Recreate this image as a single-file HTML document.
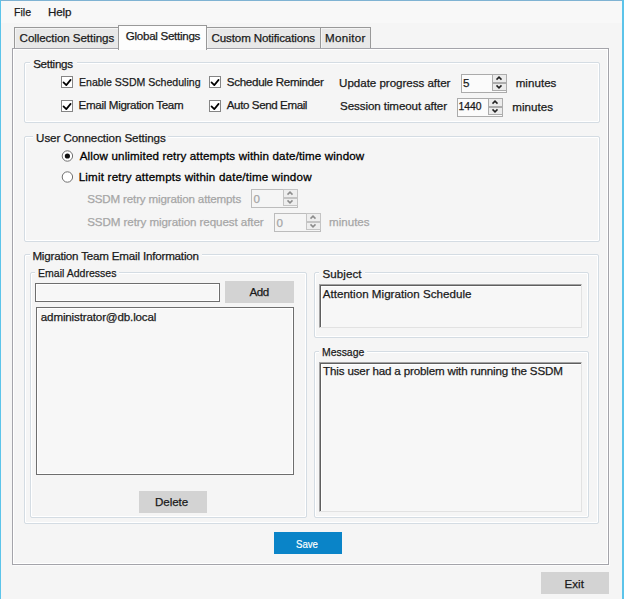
<!DOCTYPE html>
<html><head><meta charset="utf-8">
<style>
*{box-sizing:border-box}
html,body{margin:0;padding:0}
body{width:624px;height:599px;position:relative;overflow:hidden;background:#f5f5f5;font-family:"Liberation Sans",sans-serif}
.a{position:absolute}
.t{position:absolute;font:11.6px/14px "Liberation Sans",sans-serif;white-space:nowrap;color:#1a1a1a;-webkit-text-stroke:0.25px #1a1a1a}
.t.b{color:#000;-webkit-text-stroke:0.3px #000}
.t.d{color:#a6a6a6;-webkit-text-stroke:0.25px #a6a6a6}
.t.w{color:#fff;-webkit-text-stroke:0.2px #fff}
.t.n{font-size:10.4px}
.grp{position:absolute;border:1px solid #d4dce3;border-radius:2px;box-shadow:inset 0 0 0 1px #fff}
.gt{position:absolute;background:#f5f5f5;height:6px}
.cb{position:absolute;width:12px;height:12px;border:1px solid #8a8a8a;background:#fff}
.rd{position:absolute;width:12px;height:12px;border:1px solid #7a7a7a;border-radius:50%;background:#fff}
.nud{position:absolute;border:1px solid #b9b9b9;background:#fff}
.sp{position:absolute;right:1px;top:1px;bottom:1px;width:15px;background:#e9e9e9;border-left:1px solid #c4c4c4}
.btn{position:absolute;background:#d3d3d3}
.tb{position:absolute;border:1px solid #7a7a7a;background:#fbfbfb}
.tb3{position:absolute;background:#f7f7f7;border-top:1px solid #a3a3a3;border-left:1px solid #a3a3a3;border-right:1px solid #e2e2e2;border-bottom:1px solid #e2e2e2;box-shadow:inset 1px 1px 0 #5f5f5f, inset 2px 2px 0 #fff}
</style></head><body>
<!-- window chrome -->
<div class="a" style="left:0;top:0;width:624px;height:23px;background:#f8f8f8"></div>
<div class="a" style="left:0;top:0;width:624px;height:1px;background:#7fb3d3"></div>
<div class="a" style="left:0;top:0;width:1px;height:599px;background:#5cc4ea"></div>
<div class="a" style="left:622px;top:0;width:2px;height:599px;background:#5cc4ea"></div>
<div class="a" style="left:12px;top:48px;width:597px;height:517px;border:1px solid #a4a4aa;box-shadow:inset 1px 1px 0 #fff, inset -1px -1px 0 #fff, 1px 1px 0 #fcfcfc;background:#f5f5f5"></div>
<div class="a" style="left:14px;top:27px;width:105px;height:21px;border:1px solid #999;border-bottom:none;background:#e8e8e8;box-shadow:inset 1px 1px 0 #f4f4f4"></div>
<div class="a" style="left:206px;top:27px;width:115px;height:21px;border:1px solid #999;border-bottom:none;background:#e8e8e8;box-shadow:inset 1px 1px 0 #f4f4f4"></div>
<div class="a" style="left:320px;top:27px;width:51px;height:21px;border:1px solid #999;border-bottom:none;background:#e8e8e8;box-shadow:inset 1px 1px 0 #f4f4f4"></div>
<div class="a" style="left:118px;top:25px;width:89px;height:25px;border:1px solid #999;border-bottom:none;background:#fdfdfd"></div>
<div class="grp" style="left:24px;top:62px;width:576px;height:61px"></div>
<div class="gt" style="left:30px;top:60px;width:47px"></div>
<div class="grp" style="left:24px;top:136px;width:576px;height:106px"></div>
<div class="gt" style="left:33px;top:134px;width:135px"></div>
<div class="grp" style="left:24px;top:254px;width:575px;height:270px"></div>
<div class="gt" style="left:30px;top:252px;width:172px"></div>
<div class="grp" style="left:30px;top:272px;width:277px;height:246px"></div>
<div class="gt" style="left:35px;top:270px;width:84px"></div>
<div class="grp" style="left:314px;top:272px;width:275px;height:66px"></div>
<div class="gt" style="left:319px;top:270px;width:46px"></div>
<div class="grp" style="left:314px;top:351px;width:275px;height:167px"></div>
<div class="gt" style="left:319px;top:349px;width:48px"></div>
<svg class="a" style="left:61px;top:76px" width="12" height="12"><rect x="0.5" y="0.5" width="11" height="11" fill="#fff" stroke="#858585"/><path d="M2.5 6.3 L5.3 9.1 L9.6 3.9" fill="none" stroke="#000" stroke-width="1.7" stroke-linecap="round" stroke-linejoin="round"/></svg>
<svg class="a" style="left:61px;top:100px" width="12" height="12"><rect x="0.5" y="0.5" width="11" height="11" fill="#fff" stroke="#858585"/><path d="M2.5 6.3 L5.3 9.1 L9.6 3.9" fill="none" stroke="#000" stroke-width="1.7" stroke-linecap="round" stroke-linejoin="round"/></svg>
<svg class="a" style="left:209px;top:76px" width="12" height="12"><rect x="0.5" y="0.5" width="11" height="11" fill="#fff" stroke="#858585"/><path d="M2.5 6.3 L5.3 9.1 L9.6 3.9" fill="none" stroke="#000" stroke-width="1.7" stroke-linecap="round" stroke-linejoin="round"/></svg>
<svg class="a" style="left:209px;top:100px" width="12" height="12"><rect x="0.5" y="0.5" width="11" height="11" fill="#fff" stroke="#858585"/><path d="M2.5 6.3 L5.3 9.1 L9.6 3.9" fill="none" stroke="#000" stroke-width="1.7" stroke-linecap="round" stroke-linejoin="round"/></svg>
<svg class="a" style="left:61px;top:150px" width="13" height="13"><circle cx="6.4" cy="6.0" r="5.2" fill="#fff" stroke="#707070"/><circle cx="6.4" cy="6.0" r="2.6" fill="#111"/></svg>
<svg class="a" style="left:61px;top:171px" width="13" height="13"><circle cx="6.4" cy="6.0" r="5.2" fill="#fff" stroke="#707070"/></svg>
<svg class="a" style="left:461px;top:74px" width="46" height="19"><rect x="0.5" y="0.5" width="45" height="18" fill="#fbfbfb" stroke="#ababab"/><rect x="31.5" y="0.5" width="14" height="8" fill="#ebebeb" stroke="#acacac"/><rect x="31.5" y="9.5" width="14" height="7" fill="#ebebeb" stroke="#acacac"/><path d="M35.5 5.6 L38 3.1 L40.5 5.6 M35.5 11.4 L38 13.9 L40.5 11.4" fill="none" stroke="#222" stroke-width="1.5"/></svg>
<svg class="a" style="left:457px;top:98px" width="46" height="19"><rect x="0.5" y="0.5" width="45" height="18" fill="#fbfbfb" stroke="#ababab"/><rect x="31.5" y="0.5" width="14" height="8" fill="#ebebeb" stroke="#acacac"/><rect x="31.5" y="9.5" width="14" height="7" fill="#ebebeb" stroke="#acacac"/><path d="M35.5 5.6 L38 3.1 L40.5 5.6 M35.5 11.4 L38 13.9 L40.5 11.4" fill="none" stroke="#222" stroke-width="1.5"/></svg>
<svg class="a" style="left:251px;top:189px" width="47" height="19"><rect x="0.5" y="0.5" width="46" height="18" fill="#f5f5f5" stroke="#bcbcbc"/><rect x="32.5" y="0.5" width="14" height="8" fill="#eeeeee" stroke="#c4c4c4"/><rect x="32.5" y="9.5" width="14" height="7" fill="#eeeeee" stroke="#c4c4c4"/><path d="M36.5 5.6 L39 3.1 L41.5 5.6 M36.5 11.4 L39 13.9 L41.5 11.4" fill="none" stroke="#8c8c8c" stroke-width="1.5"/></svg>
<svg class="a" style="left:274px;top:213px" width="47" height="19"><rect x="0.5" y="0.5" width="46" height="18" fill="#f5f5f5" stroke="#bcbcbc"/><rect x="32.5" y="0.5" width="14" height="8" fill="#eeeeee" stroke="#c4c4c4"/><rect x="32.5" y="9.5" width="14" height="7" fill="#eeeeee" stroke="#c4c4c4"/><path d="M36.5 5.6 L39 3.1 L41.5 5.6 M36.5 11.4 L39 13.9 L41.5 11.4" fill="none" stroke="#8c8c8c" stroke-width="1.5"/></svg>
<div class="a" style="left:35px;top:283px;width:185px;height:19px;border:1px solid #6e6e6e;box-shadow:inset 0 0 0 1px #fff;background:#f7f7f7"></div>
<div class="a" style="left:36px;top:307px;width:258px;height:168px;border:1px solid #6e6e6e;box-shadow:inset 0 0 0 1px #fff;background:#f7f7f7"></div>
<div class="tb3" style="left:319px;top:284px;width:263px;height:44px"></div>
<div class="tb3" style="left:319px;top:362px;width:263px;height:150px"></div>
<div class="btn" style="left:225px;top:281px;width:69px;height:22px"></div>
<div class="btn" style="left:139px;top:491px;width:68px;height:22px"></div>
<div class="btn" style="left:274px;top:532px;width:68px;height:22px;background:#0a84c8"></div>
<div class="btn" style="left:541px;top:572px;width:68px;height:22px"></div>
<div class="t" style="left:14.2px;top:5px;transform:scaleX(0.911);transform-origin:0 0">File</div>
<div class="t" style="left:48.1px;top:5px;letter-spacing:-0.17px">Help</div>
<div class="t" style="left:19.6px;top:31px;letter-spacing:-0.08px">Collection Settings</div>
<div class="t" style="left:125.8px;top:29px;letter-spacing:-0.29px">Global Settings</div>
<div class="t" style="left:211.6px;top:31px;letter-spacing:-0.15px">Custom Notifications</div>
<div class="t" style="left:325.0px;top:31px;letter-spacing:0.28px">Monitor</div>
<div class="t" style="left:33.2px;top:57px;letter-spacing:-0.30px">Settings</div>
<div class="t" style="left:78.7px;top:75px;transform:scaleX(0.911);transform-origin:0 0">Enable SSDM Scheduling</div>
<div class="t" style="left:78.6px;top:98px;letter-spacing:-0.33px">Email Migration Team</div>
<div class="t" style="left:226.8px;top:75px;letter-spacing:-0.30px">Schedule Reminder</div>
<div class="t" style="left:226.8px;top:98px;letter-spacing:-0.41px">Auto Send Email</div>
<div class="t" style="left:339.1px;top:76px;letter-spacing:-0.04px">Update progress after</div>
<div class="t" style="left:340.1px;top:99px;letter-spacing:-0.10px">Session timeout after</div>
<div class="t" style="left:463.1px;top:76px">5</div>
<div class="t" style="left:515.7px;top:76px;letter-spacing:0.02px">minutes</div>
<div class="t n" style="left:458.6px;top:100px;letter-spacing:-0.07px">1440</div>
<div class="t" style="left:512.3px;top:100px;letter-spacing:0.02px">minutes</div>
<div class="t" style="left:36.1px;top:131px;letter-spacing:-0.08px">User Connection Settings</div>
<div class="t b" style="left:79.7px;top:149px;letter-spacing:0.14px">Allow unlimited retry attempts within date/time window</div>
<div class="t b" style="left:78.7px;top:170px;letter-spacing:0.20px">Limit retry attempts within date/time window</div>
<div class="t d" style="left:87.2px;top:192px;letter-spacing:-0.16px">SSDM retry migration attempts</div>
<div class="t d" style="left:253.6px;top:192px">0</div>
<div class="t d" style="left:87.2px;top:215px;letter-spacing:-0.08px">SSDM retry migration request after</div>
<div class="t d" style="left:276.4px;top:216px">0</div>
<div class="t d" style="left:329.1px;top:215px;letter-spacing:-0.02px">minutes</div>
<div class="t" style="left:32.4px;top:249px;letter-spacing:-0.19px">Migration Team Email Information</div>
<div class="t" style="left:37.8px;top:266px;transform:scaleX(0.908);transform-origin:0 0">Email Addresses</div>
<div class="t" style="left:249.4px;top:285px;letter-spacing:-0.40px">Add</div>
<div class="t" style="left:40.8px;top:310px;letter-spacing:-0.15px">administrator@db.local</div>
<div class="t" style="left:155.0px;top:495px;letter-spacing:-0.06px">Delete</div>
<div class="t" style="left:322.6px;top:267px;letter-spacing:0.03px">Subject</div>
<div class="t" style="left:322.7px;top:287px;letter-spacing:0.02px">Attention Migration Schedule</div>
<div class="t" style="left:321.8px;top:345px;transform:scaleX(0.898);transform-origin:0 0">Message</div>
<div class="t" style="left:323.1px;top:364px;letter-spacing:-0.16px">This user had a problem with running the SSDM</div>
<div class="t w" style="left:296.1px;top:537px;transform:scaleX(0.831);transform-origin:0 0">Save</div>
<div class="t" style="left:564.4px;top:577px;letter-spacing:0.07px">Exit</div>
</body></html>
